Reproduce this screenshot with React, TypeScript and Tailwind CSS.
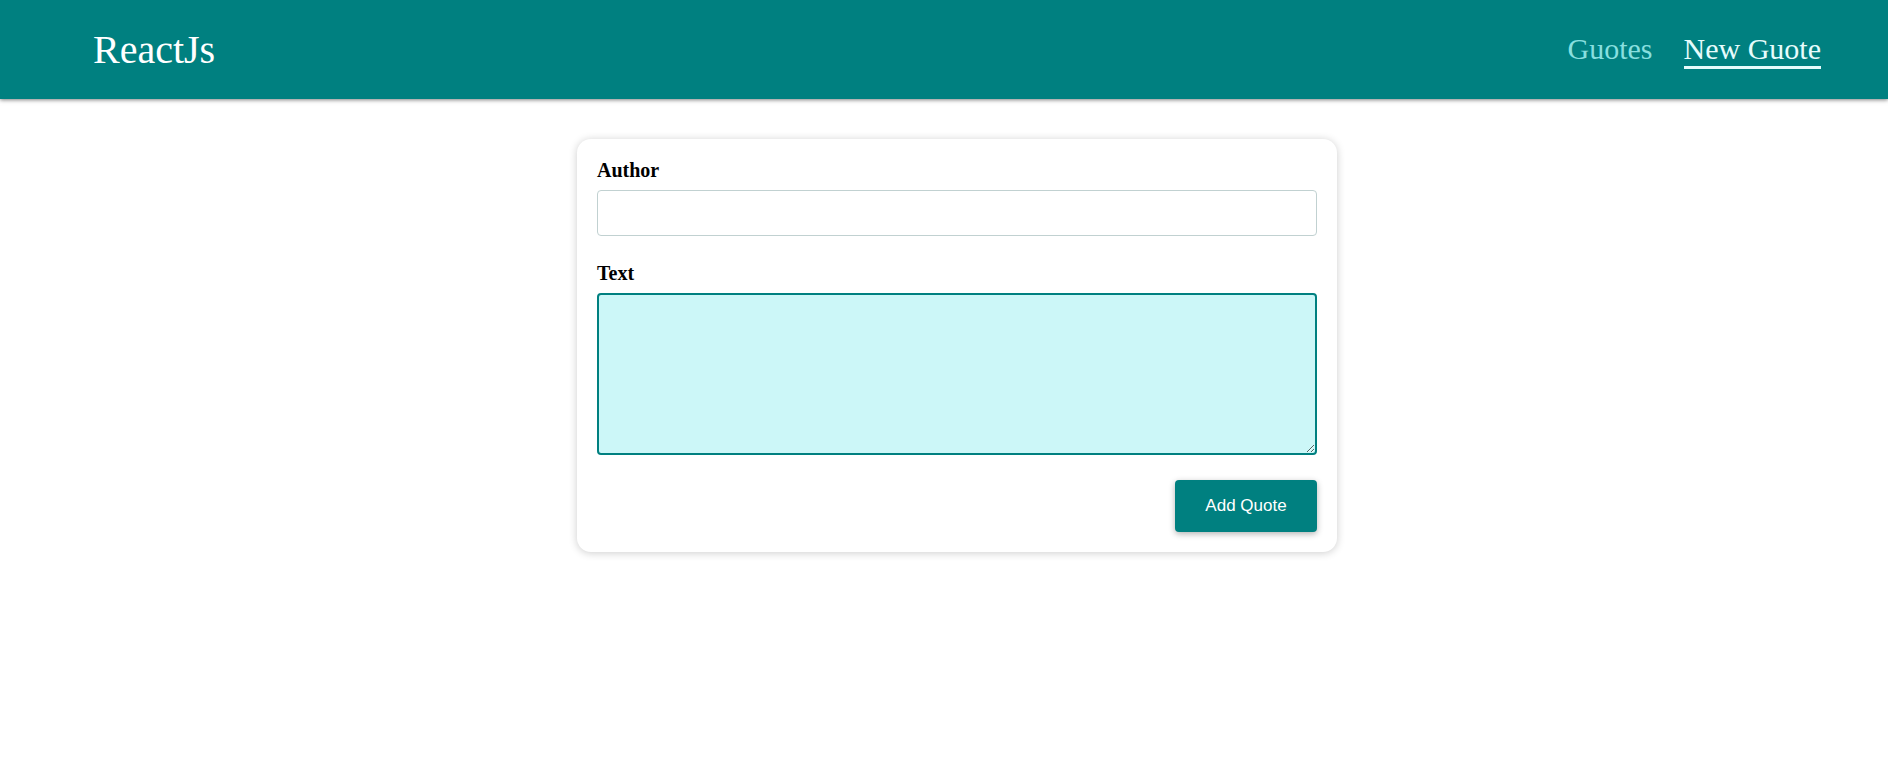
import { useState } from "react"

function MainNavigation() {
  return (
    <header className="relative z-10 flex h-[99px] w-full items-center justify-between bg-[#008080] pl-[93px] pr-[67px] shadow-[0_1px_4px_rgba(0,0,0,0.5)]">
      <div className="text-[40px] leading-none text-white">ReactJs</div>
      <nav className="pt-[3px]">
        <ul className="flex items-center gap-[31px]">
          <li>
            <a
              href="#"
              className="block border-b-[3px] border-transparent pb-[2px] text-[30px] leading-[30px] text-[#88dfdf]"
            >
              Guotes
            </a>
          </li>
          <li>
            <a
              href="#"
              className="block border-b-[3px] border-[#e6fcfc] pb-[2px] text-[30px] leading-[30px] text-[#e6fcfc]"
            >
              New Guote
            </a>
          </li>
        </ul>
      </nav>
    </header>
  )
}

function QuoteForm() {
  const [author, setAuthor] = useState("")
  const [text, setText] = useState("")

  const submitHandler = (event: any) => {
    event.preventDefault()
  }

  return (
    <div className="w-[760px] rounded-[14px] bg-white p-5 shadow-[0_1px_8px_rgba(0,0,0,0.2)]">
      <form onSubmit={submitHandler}>
        <div className="mb-[26px]">
          <label htmlFor="author" className="mb-2 block text-[20px] font-bold leading-[23px]">
            Author
          </label>
          <input
            id="author"
            type="text"
            value={author}
            onChange={(e) => setAuthor(e.target.value)}
            className="block h-[46px] w-full rounded-[4px] border border-[#c1d1d1] bg-white px-1 text-base outline-none"
          />
        </div>
        <div>
          <label htmlFor="text" className="mb-2 block text-[20px] font-bold leading-[23px]">
            Text
          </label>
          <textarea
            id="text"
            value={text}
            onChange={(e) => setText(e.target.value)}
            className="block h-[162px] w-full rounded-[4px] border-2 border-[#008080] bg-[#ccf7f8] px-1 text-base outline-none"
          />
        </div>
        <div className="mt-[25px] flex justify-end">
          <button
            type="submit"
            className="h-[52px] w-[142px] rounded-[4px] bg-[#008080] font-['Liberation_Sans',Arial,sans-serif] text-[17px] text-white shadow-[0_2px_6px_rgba(0,0,0,0.3)]"
          >
            Add Quote
          </button>
        </div>
      </form>
    </div>
  )
}

export default function App() {
  return (
    <div className="min-h-[762px] bg-white font-['Liberation_Serif','Times_New_Roman',serif] text-black">
      <MainNavigation />
      <main className="flex justify-center pl-[26px] pt-10">
        <QuoteForm />
      </main>
    </div>
  )
}
